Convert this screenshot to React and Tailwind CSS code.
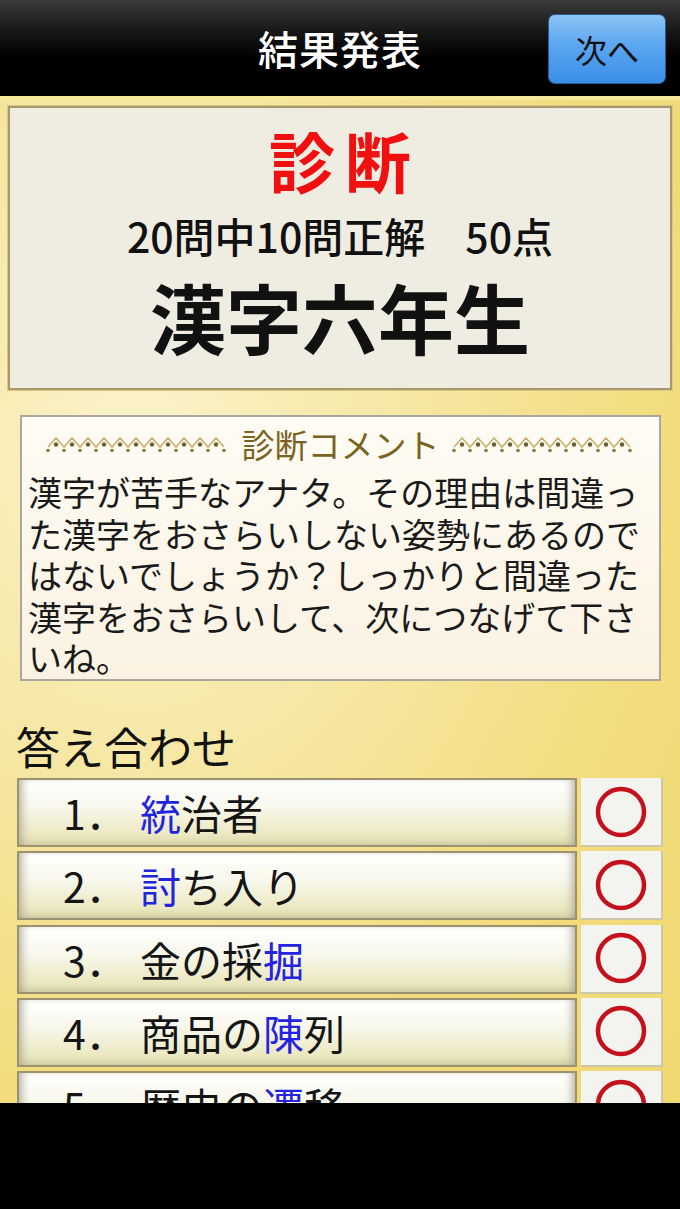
import React from 'react';

const answers = [
  { no: '1', parts: [['統', true], ['治者', false]] },
  { no: '2', parts: [['討', true], ['ち入り', false]] },
  { no: '3', parts: [['金の採', false], ['掘', true]] },
  { no: '4', parts: [['商品の', false], ['陳', true], ['列', false]] },
  { no: '5', parts: [['歴史の', false], ['遷', true], ['移', false]] },
];

const commentLines = [
  '漢字が苦手なアナタ。その理由は間違っ',
  'た漢字をおさらいしない姿勢にあるので',
  'はないでしょうか？しっかりと間違った',
  '漢字をおさらいして、次につなげて下さ',
  'いね。',
];

function Ornament() {
  // zigzag line with dots, gold
  const peaks = 11;
  const step = 16;
  const pts = [];
  for (let i = 0; i <= peaks * 2; i++) {
    pts.push(`${i * (step / 2) + 2},${i % 2 === 0 ? 12 : 3}`);
  }
  return (
    <svg width="184" height="18" viewBox="0 0 184 18">
      <polyline points={pts.join(' ')} fill="none" stroke="#c8b070" strokeWidth="1.6" />
      {Array.from({ length: peaks }).map((_, i) => (
        <circle key={'a' + i} cx={i * step + 10} cy="9.5" r="2.2" fill="#6e6030" />
      ))}
      {Array.from({ length: peaks + 1 }).map((_, i) => (
        <circle key={'b' + i} cx={i * step + 2} cy="15.5" r="1.8" fill="#8a7a3a" />
      ))}
    </svg>
  );
}

function CircleMark() {
  return (
    <svg width="52" height="52" viewBox="0 0 52 52">
      <circle cx="26" cy="26" r="23" fill="none" stroke="#c4111b" strokeWidth="4.5" />
    </svg>
  );
}

export default function App() {
  return (
    <div className="w-[680px] h-[1209px] flex flex-col bg-black font-['Noto_Sans_CJK_JP','Noto_Sans',sans-serif] overflow-hidden">
      {/* Header */}
      <div className="h-[96px] shrink-0 relative flex items-center justify-center bg-[linear-gradient(to_bottom,#3a3a3a_0%,#151515_35%,#000_60%,#000_100%)]">
        <span className="text-white text-[40px] font-medium leading-none tracking-[1px]">結果発表</span>
        <button className="absolute left-[548px] top-[14px] w-[118px] h-[70px] rounded-[7px] border border-[#2a5a90] bg-[linear-gradient(to_bottom,#8cc4f6_0%,#5aa6f0_45%,#3a8ee8_100%)] text-[#111] text-[32px] leading-none flex items-center justify-center">
          次へ
        </button>
      </div>

      {/* Main */}
      <div className="h-[1007px] shrink-0 overflow-hidden border-t-[4px] border-[#f7e99a] bg-[radial-gradient(ellipse_at_20%_35%,#fbf3cc_0%,#f6e7a4_35%,#f2dc7c_70%,#f0d870_100%)] flex flex-col">
        {/* Result box */}
        <div className="shrink-0 mt-[6px] mx-[8px] h-[284px] border-2 border-[#a89868] bg-[#efede1] shadow-[0_0_0_1px_#d8c888] flex flex-col items-center">
          <div className="mt-[20px] h-[62px] flex items-center text-[66px] font-bold text-[#f01010] tracking-[10px] pl-[10px] leading-none">診断</div>
          <div className="mt-[22px] h-[46px] flex items-center text-[41px] font-medium text-[#111] leading-none">
            20問中10問正解<span className="inline-block w-[40px]"></span>50点
          </div>
          <div className="mt-[18px] h-[80px] flex items-center text-[76px] font-bold text-[#111] leading-none">漢字六年生</div>
        </div>

        {/* Comment box */}
        <div className="shrink-0 mt-[25px] ml-[20px] mr-[19px] h-[266px] border-2 border-[#a8a8a0] bg-[linear-gradient(to_bottom,#fefcf4,#fbf2e2)]">
          <div className="h-[54px] flex items-center justify-center gap-[12px]">
            <Ornament />
            <span className="text-[33px] leading-none text-[#7a6220]">診断コメント</span>
            <Ornament />
          </div>
          <div className="pl-[6px] text-[34px] leading-[41.5px] text-[#1a1a1a] whitespace-nowrap">
            {commentLines.map((l, i) => (
              <div key={i} className="h-[41.5px]">{l}</div>
            ))}
          </div>
        </div>

        {/* Answers */}
        <div className="shrink-0 mt-[40px] ml-[16px] h-[50px] flex items-center text-[44px] leading-none text-[#111]">答え合わせ</div>
        <div className="shrink-0 mt-[7px] ml-[17px] flex flex-col gap-[4.3px]">
          {answers.map(a => (
            <div key={a.no} className="flex h-[69px] shrink-0 gap-[4px]">
              <div className="w-[560px] h-full border-2 border-[#9c9272] bg-[linear-gradient(to_bottom,#ffffff_0%,#f8f8ee_40%,#ebe8c0_85%,#d8d4a8_100%)] shadow-[inset_8px_0_10px_-6px_#a8a490,inset_-8px_0_10px_-6px_#a8a490] flex items-center text-[41px] leading-none text-[#151515]">
                <span className="w-[121px] pl-[44px] shrink-0">{a.no}．</span>
                <span>
                  {a.parts.map(([txt, blue], i) => (
                    <span key={i} className={blue ? 'text-[#2424e0]' : ''}>{txt}</span>
                  ))}
                </span>
              </div>
              <div className="w-[82px] h-full bg-[#f3f3ef] border-r-2 border-b-2 border-[#cdc8ac] flex items-center justify-center">
                <CircleMark />
              </div>
            </div>
          ))}
        </div>
      </div>

      {/* Bottom black area */}
      <div className="flex-1 bg-black" />
    </div>
  );
}
